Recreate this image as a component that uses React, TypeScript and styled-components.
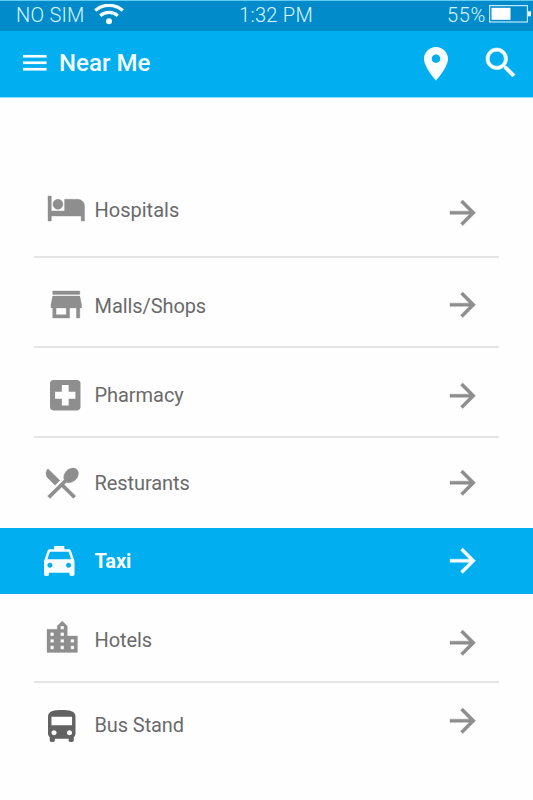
import React from 'react';
import styled, { createGlobalStyle } from 'styled-components';

const GlobalStyle = createGlobalStyle`
  * { box-sizing: border-box; }
  body { margin: 0; background: #fff; font-family: Roboto, sans-serif; }
  svg { display: block; }
`;

const Screen = styled.main`
  width: 533px;
  height: 800px;
  overflow: hidden;
  background: #fefefe;
`;

const StatusBar = styled.div`
  display: grid;
  grid-template-columns: 94px 1fr 86px;
  height: 31px;
  background: #028bca;
  border-top: 1px solid #5fcdf3;
  color: #d9f5ff;
`;

const StatusText = styled.span<{ $left?: number; $spacing?: number }>`
  padding-left: ${(p) => p.$left ?? 0}px;
  font-size: 20px;
  font-weight: 300;
  line-height: 28px;
  letter-spacing: ${(p) => p.$spacing ?? 0}px;
  white-space: nowrap;
`;

const StatusMiddle = styled.div`
  display: flex;
`;

const Wifi = styled.svg`
  flex: none;
  width: 30px;
  height: 21px;
  margin-top: 3px;
  color: #f0fcff;
`;

const BatteryGroup = styled.div`
  display: flex;
`;

const Battery = styled.svg`
  flex: none;
  width: 42px;
  height: 18px;
  margin-top: 4px;
  margin-left: auto;
  margin-right: 2px;
`;

const Header = styled.header`
  display: flex;
  align-items: flex-start;
  height: 67px;
  padding-left: 23px;
  padding-right: 18px;
  background: #01aef0;
  border-bottom: 1px solid #8bdaf7;
  color: #f8feff;
`;

const Title = styled.h1`
  flex: 1;
  margin: 18px 0 0 12.5px;
  font-size: 24px;
  font-weight: 500;
  line-height: 28px;
  letter-spacing: 0.05px;
`;

const List = styled.ul`
  margin: 0;
  padding: 0;
  list-style: none;
`;

const Row = styled.li<{ $height: number; $active?: boolean; $line?: boolean }>`
  display: grid;
  grid-template-columns: 60.5px 355.5px 1fr;
  align-items: start;
  height: ${(p) => p.$height}px;
  margin: 0 ${(p) => (p.$active ? 0 : 34)}px;
  padding: 0 ${(p) => (p.$active ? 34 : 0)}px;
  background: ${(p) => (p.$active ? '#01aef0' : 'transparent')};
  border-bottom: ${(p) => (p.$line ? '2px solid #e5e5e5' : '0')};
  color: ${(p) => (p.$active ? '#f8feff' : '#8e8e8e')};
`;

const Label = styled.span<{ $top: number; $active?: boolean; $spacing: number }>`
  margin-top: ${(p) => p.$top}px;
  font-size: 20px;
  font-weight: ${(p) => (p.$active ? 700 : 400)};
  line-height: 24px;
  letter-spacing: ${(p) => p.$spacing}px;
  color: ${(p) => (p.$active ? '#f8feff' : '#6a6a6a')};
  white-space: nowrap;
`;

const Glyph = styled.svg<{ $top: number; $left?: number; $w: number; $h: number; $color?: string }>`
  flex: none;
  overflow: visible;
  width: ${(p) => p.$w}px;
  height: ${(p) => p.$h}px;
  margin-top: ${(p) => p.$top}px;
  margin-left: ${(p) => p.$left ?? 0}px;
  color: ${(p) => p.$color ?? 'inherit'};
`;

interface IconShape {
  box: string;
  d: string;
  weight?: number;
}

const shapes: Record<string, IconShape> = {
  menu: { box: '3 6 18 12', d: 'M3 18h18v-2H3v2zm0-5h18v-2H3v2zm0-7v2h18V6H3z', weight: 0.15 },
  place: {
    box: '5 2 14 20',
    d: 'M12 2C8.13 2 5 5.13 5 9c0 5.25 7 13 7 13s7-7.75 7-13c0-3.87-3.13-7-7-7zm0 9.5c-1.38 0-2.5-1.12-2.5-2.5s1.12-2.5 2.5-2.5 2.5 1.12 2.5 2.5-1.12 2.5-2.5 2.5z',
  },
  search: {
    box: '3 3 17.5 17.5',
    d: 'M15.5 14h-.79l-.28-.27C15.41 12.59 16 11.11 16 9.5 16 5.91 13.09 3 9.5 3S3 5.91 3 9.5 5.91 16 9.5 16c1.61 0 3.09-.59 4.23-1.57l.27.28v.79l5 4.99L20.49 19l-4.99-5zm-6 0C7.01 14 5 11.99 5 9.5S7.01 5 9.5 5 14 7.01 14 9.5 11.99 14 9.5 14z',
    weight: 0.35,
  },
  arrow: {
    box: '4 4 16 16',
    d: 'M12 4l-1.41 1.41L16.17 11H4v2h12.17l-5.58 5.59L12 20l8-8z',
    weight: 0.25,
  },
  bed: {
    box: '1 5 22 15',
    d: 'M7 13c1.66 0 3-1.34 3-3S8.66 7 7 7s-3 1.34-3 3 1.34 3 3 3zm12-6h-8v7H3V5H1v15h2v-3h18v3h2v-9c0-2.21-1.79-4-4-4z',
    weight: 0.25,
  },
  store: {
    box: '3 4 18 16',
    d: 'M20 4H4v2h16V4zm1 10v-2l-1-5H4l-1 5v2h1v6h10v-6h4v6h2v-6h1zm-9 4H6v-4h6v4z',
    weight: 0.2,
  },
  pharmacy: {
    box: '3 3 18 18',
    d: 'M19 3H5c-1.1 0-1.99.9-1.99 2L3 19c0 1.1.9 2 2 2h14c1.1 0 2-.9 2-2V5c0-1.1-.9-2-2-2zm-1 11h-4v4h-4v-4H6v-4h4V6h4v4h4v4z',
  },
  food: {
    box: '2.74 3.1 19.16 18.2',
    d: 'M8.1 13.34l2.83-2.83L3.91 3.5c-1.56 1.56-1.56 4.09 0 5.66l4.19 4.18zm6.78-1.81c1.53.71 3.68.21 5.27-1.38 1.91-1.91 2.28-4.65.81-6.12-1.46-1.46-4.2-1.1-6.12.81-1.59 1.59-2.09 3.74-1.38 5.27L3.7 19.87l1.41 1.41L12 14.41l6.88 6.88 1.41-1.41L13.41 13l1.47-1.47z',
    weight: 0.2,
  },
  taxi: {
    box: '3 3 18 18',
    d: 'M18.92 6.01C18.72 5.42 18.16 5 17.5 5H15V3H9v2H6.5c-.66 0-1.21.42-1.42 1.01L3 12v8c0 .55.45 1 1 1h1c.55 0 1-.45 1-1v-1h12v1c0 .55.45 1 1 1h1c.55 0 1-.45 1-1v-8l-2.08-5.99zM6.5 16c-.83 0-1.5-.67-1.5-1.5S5.67 13 6.5 13s1.5.67 1.5 1.5S7.33 16 6.5 16zm11 0c-.83 0-1.5-.67-1.5-1.5s.67-1.5 1.5-1.5 1.5.67 1.5 1.5-.67 1.5-1.5 1.5zM5 11l1.5-4.5h11L19 11H5z',
  },
  city: {
    box: '3 2 18 19',
    d: 'M15 11V5l-3-3-3 3v2H3v14h18V11h-6zm-8 8H5v-2h2v2zm0-4H5v-2h2v2zm0-4H5V9h2v2zm6 8h-2v-2h2v2zm0-4h-2v-2h2v2zm0-4h-2V9h2v2zm0-4h-2V5h2v2zm6 12h-2v-2h2v2zm0-4h-2v-2h2v2z',
    weight: 0.15,
  },
  bus: {
    box: '4 2 16 19',
    d: 'M4 16c0 .88.39 1.67 1 2.22V20c0 .55.45 1 1 1h1c.55 0 1-.45 1-1v-1h8v1c0 .55.45 1 1 1h1c.55 0 1-.45 1-1v-1.78c.61-.55 1-1.34 1-2.22V6c0-3.5-3.58-4-8-4s-8 .5-8 4v10zm3.5 1c-.83 0-1.5-.67-1.5-1.5S6.67 14 7.5 14s1.5.67 1.5 1.5S8.33 17 7.5 17zm9 0c-.83 0-1.5-.67-1.5-1.5s.67-1.5 1.5-1.5 1.5.67 1.5 1.5-.67 1.5-1.5 1.5zm1.5-6H6V6h12v5z',
  },
};

interface IconProps {
  name: string;
  w: number;
  h: number;
  top: number;
  left?: number;
  color?: string;
}

const Icon = ({ name, w, h, top, left, color }: IconProps) => (
  <Glyph
    viewBox={shapes[name].box}
    preserveAspectRatio="none"
    $w={w}
    $h={h}
    $top={top}
    $left={left}
    $color={color}
    aria-hidden
  >
    <path
      fill="currentColor"
      stroke="currentColor"
      strokeWidth={shapes[name].weight ?? 0}
      d={shapes[name].d}
    />
  </Glyph>
);

interface Place {
  label: string;
  height: number;
  icon: IconProps;
  labelTop: number;
  arrowTop: number;
  spacing: number;
  active?: boolean;
  line?: boolean;
}

const places: Place[] = [
  { label: 'Hospitals', height: 160, icon: { name: 'bed', w: 36.5, h: 25, top: 98, left: 14.3 }, labelTop: 100, arrowTop: 102, spacing: 0, line: true },
  { label: 'Malls/Shops', height: 90, icon: { name: 'store', w: 30.5, h: 27, top: 33, left: 17 }, labelTop: 36, arrowTop: 33.5, spacing: -0.08, line: true },
  { label: 'Pharmacy', height: 90, icon: { name: 'pharmacy', w: 30.5, h: 30.5, top: 32, left: 16.3 }, labelTop: 35, arrowTop: 34.5, spacing: -0.05, line: true },
  { label: 'Resturants', height: 90, icon: { name: 'food', w: 32.5, h: 30.5, top: 30, left: 12 }, labelTop: 33, arrowTop: 32, spacing: -0.08 },
  { label: 'Taxi', height: 66, icon: { name: 'taxi', w: 30.5, h: 30, top: 18, left: 9.5 }, labelTop: 21, arrowTop: 20, spacing: -0.1, active: true },
  { label: 'Hotels', height: 89, icon: { name: 'city', w: 30.5, h: 31.5, top: 27, left: 13 }, labelTop: 34, arrowTop: 35.5, spacing: -0.1, line: true },
  { label: 'Bus Stand', height: 117, icon: { name: 'bus', w: 27.5, h: 32, top: 27, left: 14.3, color: '#626262' }, labelTop: 30, arrowTop: 25, spacing: -0.1 },
];

export default function App() {
  return (
    <Screen>
      <GlobalStyle />
      <StatusBar>
        <StatusText $left={16} $spacing={0.25}>NO SIM</StatusText>
        <StatusMiddle>
          <Wifi viewBox="0 0 30 21" fill="none" stroke="currentColor" strokeWidth="3.3">
            <path d="M1.2 6.4C9 -.4 21 -.4 28.8 6.4M6.2 11.7c5-4.4 12.6-4.4 17.6 0" />
            <circle cx="15" cy="17.2" r="3" fill="currentColor" stroke="none" />
          </Wifi>
          <StatusText $left={115} $spacing={0.3}>1:32 PM</StatusText>
        </StatusMiddle>
        <BatteryGroup>
          <StatusText $spacing={0.6}>55%</StatusText>
          <Battery viewBox="0 0 42 18">
            <rect x="0.6" y="0.6" width="37.8" height="16.4" fill="none" stroke="#bdebfb" strokeWidth="1.2" />
            <rect x="2.5" y="2.8" width="19" height="12" fill="#fff" />
            <rect x="39" y="6.3" width="3" height="5" fill="#e9faff" />
          </Battery>
        </BatteryGroup>
      </StatusBar>
      <Header>
        <Icon name="menu" w={23.5} h={15.5} top={23.5} />
        <Title>Near Me</Title>
        <Icon name="place" w={24} h={33.5} top={16} />
        <Icon name="search" w={29} h={29} top={17} left={38} />
      </Header>
      <List>
        {places.map((p) => (
          <Row key={p.label} $height={p.height} $active={p.active} $line={p.line}>
            <Icon {...p.icon} />
            <Label $top={p.labelTop} $active={p.active} $spacing={p.spacing}>
              {p.label}
            </Label>
            <Icon name="arrow" w={25.5} h={25.5} top={p.arrowTop} />
          </Row>
        ))}
      </List>
    </Screen>
  );
}
